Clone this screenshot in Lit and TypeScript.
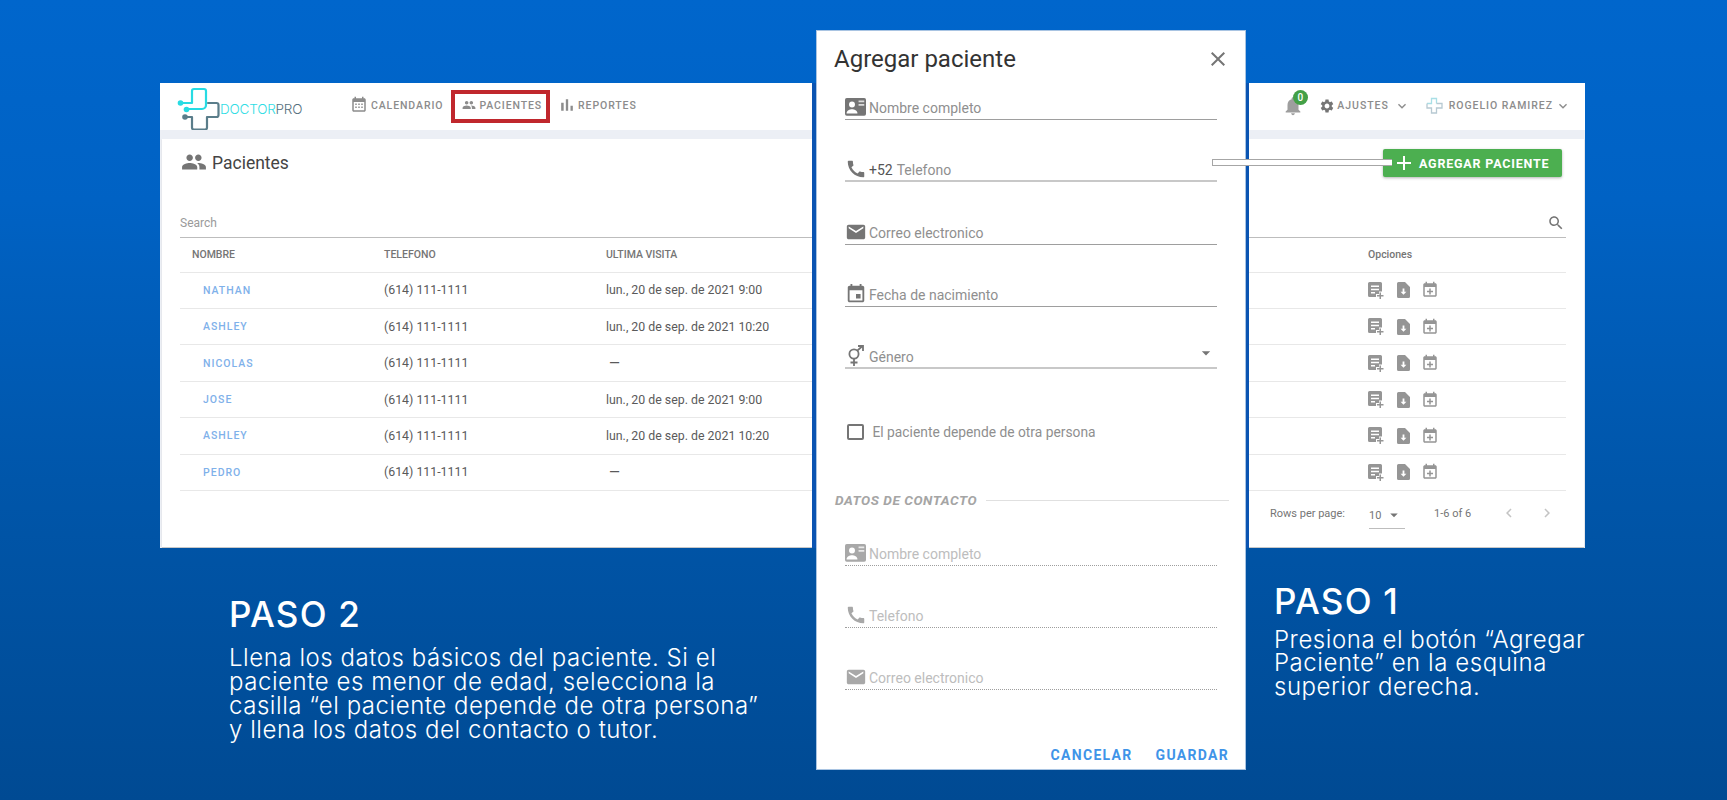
import { LitElement, html, css, svg } from "lit";
import { customElement } from "lit/decorators.js";

const P = {
  cal: "M19 3h-1V1h-2v2H8V1H6v2H5c-1.1 0-2 .9-2 2v14c0 1.1.9 2 2 2h14c1.1 0 2-.9 2-2V5c0-1.1-.9-2-2-2zm0 16H5V8h14v11zM7 10h2v2H7zm4 0h2v2h-2zm4 0h2v2h-2zM7 14h2v2H7zm4 0h2v2h-2zm4 0h2v2h-2z",
  event: "M17 12h-5v5h5v-5zM16 1v2H8V1H6v2H5c-1.11 0-1.99.9-1.99 2L3 19c0 1.1.89 2 2 2h14c1.1 0 2-.9 2-2V5c0-1.1-.9-2-2-2h-1V1h-2zm3 18H5V8h14v11z",
  people: "M16 11c1.66 0 2.99-1.34 2.99-3S17.66 5 16 5c-1.66 0-3 1.34-3 3s1.34 3 3 3zm-8 0c1.66 0 2.99-1.34 2.99-3S9.66 5 8 5C6.34 5 5 6.34 5 8s1.34 3 3 3zm0 2c-2.33 0-7 1.17-7 3.5V19h14v-2.5c0-2.33-4.67-3.5-7-3.5zm8 0c-.29 0-.62.02-.97.05 1.16.84 1.97 1.97 1.97 3.45V19h6v-2.5c0-2.33-4.67-3.5-7-3.5z",
  bars: "M5 9.2h3V19H5zM10.6 5h2.8v14h-2.8zm5.6 8H19v6h-2.8z",
  bell: "M12 22c1.1 0 2-.9 2-2h-4c0 1.1.89 2 2 2zm6-6v-5c0-3.07-1.64-5.64-4.5-6.32V4c0-.83-.67-1.5-1.5-1.5s-1.5.67-1.5 1.5v.68C7.63 5.36 6 7.92 6 11v5l-2 2v1h16v-1l-2-2z",
  gear: "M19.14 12.94c.04-.3.06-.61.06-.94 0-.32-.02-.64-.07-.94l2.03-1.58c.18-.14.23-.41.12-.61l-1.92-3.32c-.12-.22-.37-.29-.59-.22l-2.39.96c-.5-.38-1.03-.7-1.62-.94l-.36-2.54c-.04-.24-.24-.41-.48-.41h-3.84c-.24 0-.43.17-.47.41l-.36 2.54c-.59.24-1.13.57-1.62.94l-2.39-.96c-.22-.08-.47 0-.59.22L2.74 8.87c-.12.21-.08.47.12.61l2.03 1.58c-.05.3-.09.63-.09.94s.02.64.07.94l-2.03 1.58c-.18.14-.23.41-.12.61l1.92 3.32c.12.22.37.29.59.22l2.39-.96c.5.38 1.03.7 1.62.94l.36 2.54c.05.24.24.41.48.41h3.84c.24 0 .44-.17.47-.41l.36-2.54c.59-.24 1.13-.56 1.62-.94l2.39.96c.22.08.47 0 .59-.22l1.92-3.32c.12-.22.07-.47-.12-.61l-2.01-1.58zM12 15.6c-1.98 0-3.6-1.62-3.6-3.6s1.62-3.6 3.6-3.6 3.6 1.62 3.6 3.6-1.62 3.6-3.6 3.6z",
  chev: "M7.41 8.59 12 13.17l4.59-4.58L18 10l-6 6-6-6z",
  search: "M15.5 14h-.79l-.28-.27C15.41 12.59 16 11.11 16 9.5 16 5.91 13.09 3 9.5 3S3 5.91 3 9.5 5.91 16 9.5 16c1.61 0 3.09-.59 4.23-1.57l.27.28v.79l5 4.99L20.49 19l-4.99-5zm-6 0C7.01 14 5 11.99 5 9.5S7.01 5 9.5 5 14 7.01 14 9.5 11.99 14 9.5 14z",
  close: "M19 6.41 17.59 5 12 10.59 6.41 5 5 6.41 10.59 12 5 17.59 6.41 19 12 13.41 17.59 19 19 17.59 13.41 12z",
  plus: "M19 13h-6v6h-2v-6H5v-2h6V5h2v6h6v2z",
  phone: "M20.01 15.38c-1.23 0-2.42-.2-3.53-.56-.35-.12-.74-.03-1.01.24l-1.57 1.97c-2.83-1.35-5.48-3.9-6.89-6.83l1.95-1.66c.27-.28.35-.67.24-1.02-.37-1.11-.56-2.3-.56-3.53 0-.54-.45-.99-.99-.99H4.19C3.65 3 3 3.24 3 3.99 3 13.28 10.73 21 20.01 21c.71 0 .99-.63.99-1.18v-3.45c0-.54-.45-.99-.99-.99z",
  mail: "M20 4H4c-1.1 0-1.99.9-1.99 2L2 18c0 1.1.9 2 2 2h16c1.1 0 2-.9 2-2V6c0-1.1-.9-2-2-2zm0 4-8 5-8-5V6l8 5 8-5v2z",
  calPlus: "M19 3h-1V1h-2v2H8V1H6v2H5c-1.11 0-2 .9-2 2v14c0 1.1.89 2 2 2h14c1.1 0 2-.9 2-2V5c0-1.1-.9-2-2-2zm0 16H5V8h14v11zM11 10h2v3h3v2h-3v3h-2v-3H8v-2h3z",
  left: "M15.41 7.41 14 6l-6 6 6 6 1.41-1.41L10.83 12z",
  right: "M10 6 8.59 7.41 13.17 12l-4.58 4.59L10 18l6-6z",
  arrow: "M7 10l5 5 5-5z",
};

const icon = (d: string, size: number, color: string, cls = "") => html`<svg class="ic ${cls}" width=${size} height=${size} viewBox="0 0 24 24" style="color:${color}"><path fill="currentColor" d=${d}></path></svg>`;

const cardIcon = (w: number, color: string) => html`<svg class="ic" width=${w} height=${w * 0.85} viewBox="0 0 24 20.4"><path fill=${color} d="M2 0h20a2 2 0 0 1 2 2v16.4a2 2 0 0 1-2 2H2a2 2 0 0 1-2-2V2a2 2 0 0 1 2-2z"></path><circle cx="8" cy="7.5" r="3.4" fill="#fff"></circle><path fill="#fff" d="M1.8 17.6c0-3 3.6-4.6 6.2-4.6s6.2 1.6 6.2 4.6z"></path><path fill="#fff" fill-opacity=".75" d="M15.5 3h6.5v2h-6.5zM15.5 7h6.5v2h-6.5z"></path></svg>`;

const genderIcon = html`<svg class="ic" width="20" height="22" viewBox="0 0 20 22" fill="none" stroke="#757575" stroke-width="1.800"><circle cx="9" cy="9" r="4.600"></circle><path d="M12.3 5.7 17.5 1M13 1h5v5M9 13.6V21M5.5 17.5h7"></path></svg>`;

const noteAdd = html`<svg class="ic" width="16" height="17" viewBox="0 0 16 17"><path fill="#959595" d="M1.5 0h11A1.5 1.5 0 0 1 14 1.500V9.500h-3V12H8v3H1.500A1.500 1.500 0 0 1 0 13.500v-12A1.500 1.500 0 0 1 1.500 0z"></path><path fill="#fff" d="M3 3.500h8v1.500H3zM3 6.700h8v1.500H3zM3 9.900h4v1.500H3z"></path><path fill="#959595" d="M11.500 10.500h1.500V13H15.500v1.500H13V17h-1.500v-2.500H9V13h2.500z"></path></svg>`;
const docDown = html`<svg class="ic" width="13" height="16" viewBox="0 0 13 16"><path fill="#959595" d="M1.500 0H8l5 5v9.500a1.500 1.500 0 0 1-1.500 1.500h-10A1.500 1.500 0 0 1 0 14.500v-13A1.500 1.500 0 0 1 1.500 0z"></path><path fill="#fff" d="M5.600 6.500h1.800v3.200h2l-2.900 3.100-2.900-3.100h2z"></path></svg>`;

const logo = svg`<svg class="ic" width="44" height="44" viewBox="0 0 44 44" fill="none" stroke-width="2.200" stroke-linecap="round" stroke-linejoin="round"><path stroke="#5a7d8a" d="M31 17h8.500a2 2 0 0 1 2 2v10a2 2 0 0 1-2 2H30v10.500a2 2 0 0 1-2 2H17a2 2 0 0 1-2-2V31H8"></path><path stroke="#27dbe3" d="M3 17h12V5a2 2 0 0 1 2-2h10a2 2 0 0 1 2 2v14a4 4 0 0 1-4 4H9"></path><circle cx="3.500" cy="17" r="2.800" fill="#27dbe3" stroke="none"></circle><circle cx="9.500" cy="23.500" r="2.800" fill="#27dbe3" stroke="none"></circle><circle cx="8" cy="31" r="2.800" fill="#5a7d8a" stroke="none"></circle></svg>`;

const smallCross = html`<svg class="ic" width="17" height="17" viewBox="0 0 17 17" fill="none" stroke-width="1.300"><path stroke="#a9dfe6" d="M1 6.500h4.500V1.500h5v5"></path><path stroke="#b7c9d2" d="M10.500 6.500H16v4.500h-5.500v5h-5v-5H1V6.500"></path></svg>`;

const ROWS = [
  ["NATHAN", "lun., 20 de sep. de 2021 9:00"],
  ["ASHLEY", "lun., 20 de sep. de 2021 10:20"],
  ["NICOLAS", "—"],
  ["JOSE", "lun., 20 de sep. de 2021 9:00"],
  ["ASHLEY", "lun., 20 de sep. de 2021 10:20"],
  ["PEDRO", "—"],
];

@customElement("app-root")
export class AppRoot extends LitElement {
  static styles = css`
    :host { display: block; position: relative; width: 1727px; height: 800px; overflow: hidden;
      background: linear-gradient(180deg, #0066cc 0%, #0062c4 25%, #0056aa 60%, #004a93 100%);
      font-family: Roboto, "Liberation Sans", sans-serif; }
    .ic { display: block; flex: none; }
    .screen { position: absolute; left: 160px; top: 83px; width: 1425px; height: 465px; background: #eceff5; overflow: hidden;
      display: flex; flex-direction: column; }
    .topbar { height: 47px; flex: none; background: #fff; display: flex; align-items: center; padding: 0 17px; }
    .brand { display: flex; align-items: center; gap: 0; width: 126px; margin-top: 3px; }
    .brand span { font: 300 13.5px Inter, sans-serif; color: #2fdde4; margin-top: 2px; letter-spacing: -0.2px; margin-left: -1px; }
    .brand b { font-weight: 300; color: #55707d; }
    .nav { display: flex; margin-left: 37px; margin-top: -1px; }
    .nav div { height: 33px; box-sizing: border-box; padding: 0 4px 2px 7px; border: 4px solid transparent; display: flex; align-items: center; gap: 3px;
      font-size: 10.500px; font-weight: 500; letter-spacing: 0.900px; color: #8c8c8c; white-space: nowrap; }
    .nav div.on { border-color: #c0272d; }
    .nav .m-cal { margin: 0 0 0 -1px; }
    .nav .m-bar { margin: 0 -2px 0 -4px; }
    .right { margin-left: auto; display: flex; align-items: center; font-size: 10.500px; font-weight: 500; letter-spacing: 0.950px; color: #8c8c8c; white-space: nowrap; margin-right: -3px; margin-top: -2px; }
    .bell { position: relative; width: 22px; margin-right: 15px; }
    .badge { position: absolute; left: 11px; top: -5px; width: 15px; height: 15px; border-radius: 50%; background: #43a047; color: #fff;
      font-size: 10px; font-weight: 500; letter-spacing: 0; display: flex; align-items: center; justify-content: center; }
    .lab { margin: 0 5px 0 2.500px; }
    .sp1 { width: 16px; }
    .sp2 { width: 6px; }
    .sp3 { width: 2px; }
    .card { flex: 1; margin: 9px 1px 1px 2px; background: #fff; padding: 0 18px; display: flex; flex-direction: column; box-shadow: 0 1px 1px #c8c8c8; }
    .titlebar { height: 75.500px; flex: none; display: flex; padding-top: 10px; box-sizing: border-box; }
    .title { display: flex; align-items: flex-start; gap: 5px; font-size: 17.500px; color: #444; line-height: 28px; margin-left: 1px; }
    .add { margin-left: auto; margin-right: 4px; width: 179px; height: 28px; border-radius: 2px; background: #4caf50; color: #fff; display: flex; align-items: center; gap: 3px; padding-left: 9px; box-sizing: border-box;
      font-size: 12.500px; font-weight: 700; letter-spacing: 0.800px; box-shadow: 0 1px 3px rgba(0,0,0,.3); white-space: nowrap; }
    .searchbar { height: 16px; display: flex; align-items: center; justify-content: space-between; font-size: 12px; color: #9a9a9a; padding-bottom: 6px; border-bottom: 1px solid #bdbdbd; }
    .searchbar .ic { margin-right: 1px; }
    .rowg { display: grid; grid-template-columns: 204px 222px 1fr 198px; align-items: center; border-bottom: 1px solid #e8e8e8; height: 36.450px; box-sizing: border-box; font-size: 12.350px; color: #5a5a5a; }
    .head { font-size: 10.500px; font-weight: 500; color: #757575; height: 35px; }
    .rowg > :first-child { padding-left: 12px; }
    .name { padding-left: 23px !important; color: #7fb1ea; font-size: 10.500px; font-weight: 500; letter-spacing: 1px; }
    .dash { margin-left: 3px; font-size: 14px; }
    .opts { display: flex; align-items: center; }
    .opts .ic:nth-child(2) { margin-left: 13px; }
    .opts .ic:nth-child(3) { margin-left: 11px; }
    .pager { display: flex; align-items: center; font-size: 11px; color: #757575; height: 55px; padding-left: 1090px; padding-bottom: 11px; box-sizing: border-box; white-space: nowrap; }
    .sel { margin-left: 24px; width: 36px; height: 26px; margin-top: 6px; border-bottom: 1px solid #bdbdbd; display: flex; align-items: center; box-sizing: border-box; gap: 4px; font-size: 11px; padding-bottom: 1px; }
    .count { margin-left: 29px; }
    .cv1 { margin-left: 29px; }
    .cv2 { margin-left: 20px; }
    .gutter { position: absolute; left: 812px; top: 83px; width: 437px; height: 465px; background: #0a54b2; }
    .modal { position: absolute; left: 816px; top: 30px; width: 430px; height: 740px; box-sizing: border-box; background: #fff; border: 1px solid #a9c4e2; display: flex; flex-direction: column; padding: 0 16px 0 17px; }
    .mhead { height: 61px; flex: none; display: flex; justify-content: space-between; box-sizing: border-box; padding-top: 13px; font-size: 24px; color: #333; line-height: 30px; }
    .mhead .ic { margin-top: 2.500px; margin-right: -1px; }
    .fields { display: flex; flex-direction: column; gap: 34.250px; margin-left: 11px; margin-right: 12px; }
    .f { height: 28px; box-sizing: border-box; border-bottom: 1px solid #9e9e9e; display: flex; align-items: flex-end; font-size: 14px; color: #8f8f8f; padding-bottom: 3px; line-height: 16px; }
    .f.thick { border-bottom: 2px solid #c8c8c8; padding-bottom: 2px; }
    .f.dis { border-bottom: 1px dotted #9e9e9e; color: #bdbdbd; }
    .iw { width: 24px; flex: none; display: flex; justify-content: flex-start; align-self: flex-end; margin-bottom: -2px; }
    .iw.c { margin-bottom: 0; }
    .f .pre { color: #555; margin-right: 4px; }
    .caret { margin-left: auto; margin-right: 1px; align-self: center; }
    .check { margin: 53px 0 0 13px; height: 20px; display: flex; align-items: center; gap: 9px; font-size: 13.800px; color: #8f8f8f; }
    .box { width: 12.500px; height: 12.500px; border: 2px solid #757575; border-radius: 2px; }
    .sect { margin: 48px 0 27.500px 1px; height: 20px; display: flex; align-items: center; gap: 9px; font-size: 13.600px; font-weight: 700; font-style: italic; color: #a5a5a5; white-space: nowrap; letter-spacing: 0.550px; }
    .sect i { flex: 1; height: 1px; background: #e0e0e0; }
    .foot { margin-top: auto; height: 24.500px; display: flex; justify-content: flex-end; gap: 23px; font-size: 14px; font-weight: 700; letter-spacing: 1.300px; color: #3f94e8; align-items: flex-start; line-height: 20px; }
    .conn { position: absolute; left: 1212px; top: 158.500px; width: 180px; height: 7px; box-sizing: border-box; background: #fff; border: 1px solid #a6a6a6; border-right: 0; }
    .cap { position: absolute; color: #fff; font-family: Inter, "Open Sans", sans-serif; white-space: nowrap; }
    .cap h2 { margin: 0; font-size: 35px; line-height: 38px; font-weight: 500; letter-spacing: 1.200px; }
    .cap p { margin: 0; font-size: 24px; line-height: 24.300px; font-weight: 300; letter-spacing: 0.550px; }
    .c2 { left: 229px; top: 595px; }
    .c2 p { margin-top: 12.500px; }
    .c1 { left: 1274px; top: 582px; }
    .c1 p { margin-top: 7.500px; line-height: 23.500px; }
  `;

  render() {
    return html`
      <div class="screen">
        <div class="topbar">
          <div class="brand">${logo}<span>DOCTOR<b>PRO</b></span></div>
          <div class="nav">
            <div>${icon(P.cal, 18, "#8c8c8c", "m-cal")}CALENDARIO</div>
            <div class="on">${icon(P.people, 14, "#8c8c8c")}PACIENTES</div>
            <div>${icon(P.bars, 20, "#8c8c8c", "m-bar")}REPORTES</div>
          </div>
          <div class="right">
            <div class="bell">${icon(P.bell, 22, "#9e9e9e")}<span class="badge">0</span></div>
            ${icon(P.gear, 16, "#757575")}<span class="lab">AJUSTES</span>${icon(P.chev, 16, "#8c8c8c")}
            <span class="sp1"></span>${smallCross}<span class="sp2"></span>ROGELIO RAMIREZ<span class="sp3"></span>${icon(P.chev, 16, "#8c8c8c")}
          </div>
        </div>
        <div class="card">
          <div class="titlebar">
            <div class="title">${icon(P.people, 26, "#757575")}Pacientes</div>
            <div class="add">${icon(P.plus, 24, "#fff")}AGREGAR PACIENTE</div>
          </div>
          <div class="searchbar">Search${icon(P.search, 18, "#757575")}</div>
          <div class="rowg head"><span>NOMBRE</span><span>TELEFONO</span><span>ULTIMA VISITA</span><span>Opciones</span></div>
          ${ROWS.map((r) => html`<div class="rowg"><span class="name">${r[0]}</span><span>(614) 111-1111</span><span class=${r[1] === "—" ? "dash" : ""}>${r[1]}</span>
            <span class="opts">${noteAdd}${docDown}${icon(P.calPlus, 18, "#959595")}</span></div>`)}
          <div class="pager">Rows per page:
            <span class="sel">10 ${icon(P.arrow, 18, "#757575")}</span>
            <span class="count">1-6 of 6</span>
            <span class="cv1">${icon(P.left, 18, "#c4c4c4")}</span>
            <span class="cv2">${icon(P.right, 18, "#c4c4c4")}</span>
          </div>
        </div>
      </div>
      <div class="gutter"></div>
      <div class="modal">
        <div class="mhead">Agregar paciente ${icon(P.close, 24, "#757575")}</div>
        <div class="fields">
          <div class="f"><span class="iw c">${cardIcon(21, "#757575")}</span>Nombre completo</div>
          <div class="f thick"><span class="iw">${icon(P.phone, 22, "#757575")}</span><span class="pre">+52</span>Telefono</div>
          <div class="f"><span class="iw">${icon(P.mail, 22, "#757575")}</span>Correo electronico</div>
          <div class="f"><span class="iw">${icon(P.event, 22, "#757575")}</span>Fecha de nacimiento</div>
          <div class="f thick"><span class="iw">${genderIcon}</span>Género<span class="caret">${icon(P.arrow, 20, "#757575")}</span></div>
        </div>
        <div class="check"><span class="box"></span>El paciente depende de otra persona</div>
        <div class="sect">DATOS DE CONTACTO<i></i></div>
        <div class="fields">
          <div class="f dis"><span class="iw c">${cardIcon(21, "#a8a8a8")}</span>Nombre completo</div>
          <div class="f dis"><span class="iw">${icon(P.phone, 22, "#a8a8a8")}</span>Telefono</div>
          <div class="f dis"><span class="iw">${icon(P.mail, 22, "#a8a8a8")}</span>Correo electronico</div>
        </div>
        <div class="foot"><span>CANCELAR</span><span>GUARDAR</span></div>
      </div>
      <div class="conn"></div>
      <div class="cap c2"><h2>PASO 2</h2><p>Llena los datos básicos del paciente. Si el<br>paciente es menor de edad, selecciona la<br>casilla “el paciente depende de otra persona”<br>y llena los datos del contacto o tutor.</p></div>
      <div class="cap c1"><h2>PASO 1</h2><p>Presiona el botón “Agregar<br>Paciente” en la esquina<br>superior derecha.</p></div>
    `;
  }
}
